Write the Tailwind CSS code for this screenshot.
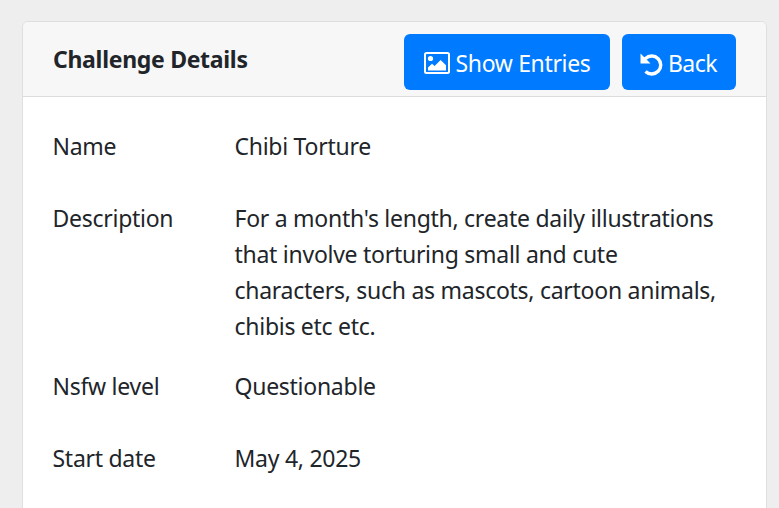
<!DOCTYPE html>
<html lang="en">
<head>
    <meta charset="UTF-8">
    <title>Challenge Details</title>
    <script src="https://cdn.jsdelivr.net/npm/@tailwindcss/browser@4"></script>
</head>
<body class="bg-[#eeeeee] font-['Noto_Sans',sans-serif] text-[#212529]">
    <div class="h-[508px] overflow-hidden pt-[21px] pl-[22px] pr-[12px]">
        <div class="bg-white border border-[#dfdfdf] rounded-[6px] h-[600px]">
            <!-- Header -->
            <div class="h-[75px] bg-[#f7f7f7] border-b border-[#dcdcdc] rounded-t-[6px] flex items-center justify-between pl-[30px] pr-[30px]">
                <h1 class="text-[23px] font-bold leading-none tracking-[-0.3px]">Challenge Details</h1>
                <div class="flex gap-3 mt-[5px]">
                    <button class="h-[56px] w-[206px] bg-[#007bff] text-white rounded-[6px] flex items-center justify-center gap-[6px] text-[23px] leading-[36px] tracking-[-0.35px]">
                        <svg class="w-[26px] h-[24px] relative top-[1px]" viewBox="0 0 26 24" fill="none">
                            <rect x="1" y="2" width="24" height="20" rx="1.5" stroke="white" stroke-width="2"/>
                            <circle cx="6.5" cy="7.5" r="2.6" fill="white"/>
                            <path d="M4 19.5v-3l4-3.8 2.6 2.4 6-6.2 5.4 5.4v5.2z" fill="white"/>
                        </svg>
                        <span class="relative top-[1px]">Show Entries</span>
                    </button>
                    <button class="h-[56px] w-[114px] bg-[#007bff] text-white rounded-[6px] flex items-center justify-center gap-[5px] text-[23px] leading-[36px] tracking-[-0.5px]">
                        <svg class="w-[24px] h-[24px] relative top-[2px] -left-[1px]" viewBox="0 0 24 24" fill="none">
                            <path d="M6.5 19.5a9 9 0 1 0 0-13L4.5 8.5" stroke="white" stroke-width="3.4"/>
                            <path d="M1.5 1.5v10h10z" fill="white"/>
                        </svg>
                        <span class="relative top-[1px] -left-[1px]">Back</span>
                    </button>
                </div>
            </div>
            <!-- Details -->
            <div class="pt-[31px] pl-[29.5px] pr-[30px] text-[23px] leading-[36px] tracking-[-0.27px]">
                <div class="grid grid-cols-[182px_1fr] mb-9">
                    <div>Name</div>
                    <div>Chibi Torture</div>
                </div>
                <div class="grid grid-cols-[182px_1fr] mb-6">
                    <div>Description</div>
                    <div>For a month's length, create daily illustrations<br>that involve torturing small and cute<br>characters, such as mascots, cartoon animals,<br>chibis etc etc.</div>
                </div>
                <div class="grid grid-cols-[182px_1fr] mb-9">
                    <div>Nsfw level</div>
                    <div>Questionable</div>
                </div>
                <div class="grid grid-cols-[182px_1fr] mb-9">
                    <div>Start date</div>
                    <div>May 4, 2025</div>
                </div>
            </div>
        </div>
    </div>
</body>
</html>
